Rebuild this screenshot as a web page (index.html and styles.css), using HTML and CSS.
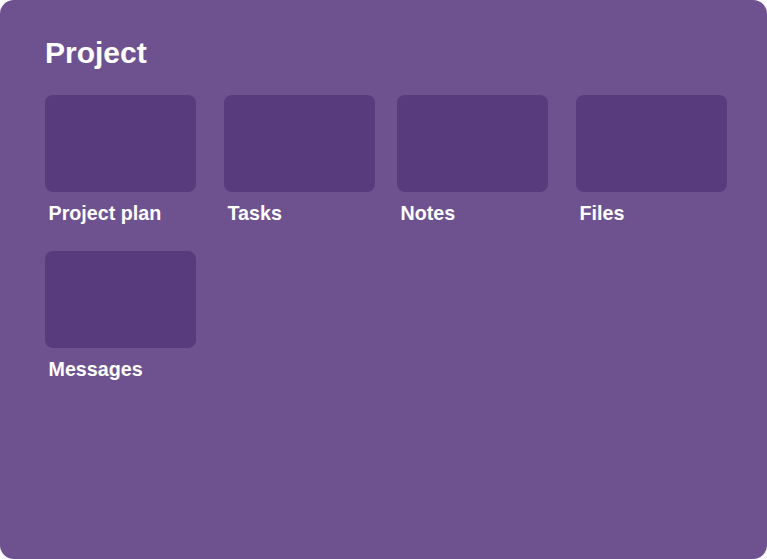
FILE: index.html
```html
<!DOCTYPE html>
<html lang="en">
<head>
<meta charset="utf-8">
<title>Project</title>
<link rel="stylesheet" href="styles.css">
</head>
<body>
<main class="panel">
  <h1 class="title">Project</h1>
  <div class="grid">
    <div class="item"><div class="tile"></div><div class="label">Project plan</div></div>
    <div class="item"><div class="tile"></div><div class="label">Tasks</div></div>
    <div class="item"><div class="tile"></div><div class="label">Notes</div></div>
    <div class="item"><div class="tile"></div><div class="label">Files</div></div>
    <div class="item"><div class="tile"></div><div class="label">Messages</div></div>
  </div>
</main>
</body>
</html>
```
FILE: styles.css
```css
html, body {
  margin: 0;
  padding: 0;
  background: #ffffff;
}
body {
  font-family: "Liberation Sans", Arial, sans-serif;
}
.panel {
  box-sizing: border-box;
  width: 767px;
  height: 559px;
  border-radius: 14px;
  background: #6e528f;
  padding: 36px 0 0 45px;
}
.title {
  margin: 0 0 25px 0;
  font-size: 30px;
  line-height: 34px;
  font-weight: bold;
  color: #ffffff;
}
.grid {
  display: grid;
  grid-template-columns: 179px 173px 179px 151px;
  row-gap: 27px;
}
.tile {
  width: 151px;
  height: 97px;
  border-radius: 8px;
  background: #573b7d;
}
.label {
  margin-top: 10px;
  padding-left: 3.5px;
  font-size: 19.7px;
  line-height: 22px;
  font-weight: bold;
  color: #ffffff;
}
```
